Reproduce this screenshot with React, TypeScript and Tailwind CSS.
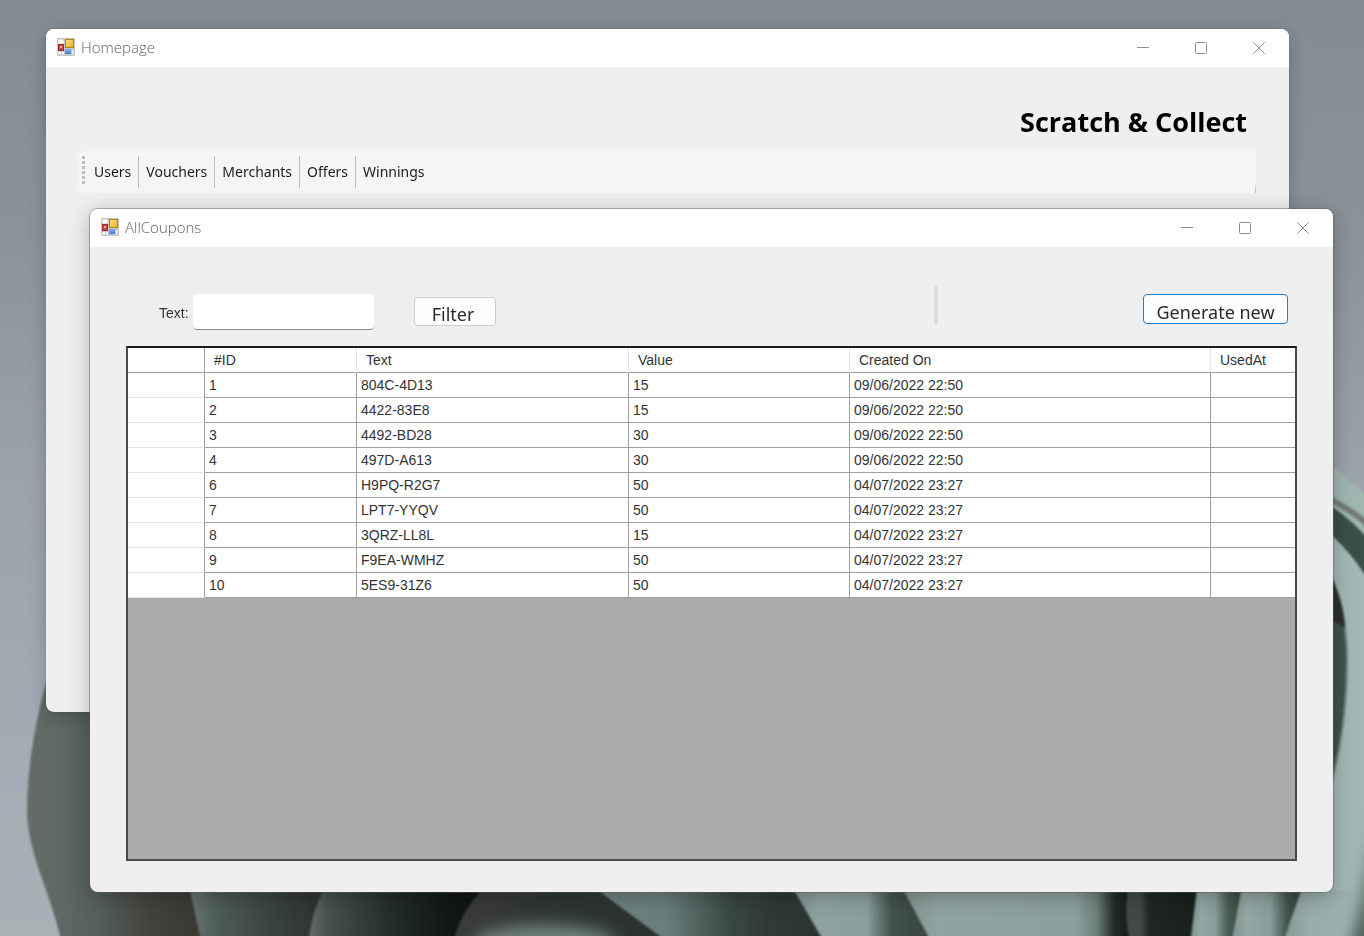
import React, { useState } from "react";

type Coupon = { id: number; text: string; value: number; createdOn: string; usedAt: string };

const COUPONS: Coupon[] = [
  { id: 1, text: "804C-4D13", value: 15, createdOn: "09/06/2022 22:50", usedAt: "" },
  { id: 2, text: "4422-83E8", value: 15, createdOn: "09/06/2022 22:50", usedAt: "" },
  { id: 3, text: "4492-BD28", value: 30, createdOn: "09/06/2022 22:50", usedAt: "" },
  { id: 4, text: "497D-A613", value: 30, createdOn: "09/06/2022 22:50", usedAt: "" },
  { id: 6, text: "H9PQ-R2G7", value: 50, createdOn: "04/07/2022 23:27", usedAt: "" },
  { id: 7, text: "LPT7-YYQV", value: 50, createdOn: "04/07/2022 23:27", usedAt: "" },
  { id: 8, text: "3QRZ-LL8L", value: 15, createdOn: "04/07/2022 23:27", usedAt: "" },
  { id: 9, text: "F9EA-WMHZ", value: 50, createdOn: "04/07/2022 23:27", usedAt: "" },
  { id: 10, text: "5ES9-31Z6", value: 50, createdOn: "04/07/2022 23:27", usedAt: "" },
];

const MENU = ["Users", "Vouchers", "Merchants", "Offers", "Winnings"];

type Stop = [number, string];

function Shade({ id, from, to, stops }: { id: string; from: number; to: number; stops: Stop[] }) {
  return (
    <linearGradient id={id} gradientUnits="userSpaceOnUse" x1={from} x2={to} y1="0" y2="0">
      {stops.map(([offset, color]) => (
        <stop key={offset} offset={offset} stopColor={color} />
      ))}
    </linearGradient>
  );
}

function Wallpaper() {
  return (
    <svg
      aria-hidden="true"
      className="absolute inset-0 h-full w-full"
      viewBox="0 0 1364 936"
      preserveAspectRatio="none"
    >
      <defs>
        <linearGradient id="sky" x1="0" y1="0" x2="0" y2="1">
          <stop offset="0" stopColor="#828c92" />
          <stop offset="0.25" stopColor="#8a939a" />
          <stop offset="0.5" stopColor="#9aa2ab" />
          <stop offset="0.8" stopColor="#a3acb5" />
          <stop offset="1" stopColor="#a8b2b5" />
        </linearGradient>
        <filter id="soft" x="-20%" y="-20%" width="140%" height="140%" colorInterpolationFilters="sRGB">
          <feGaussianBlur stdDeviation="1" />
        </filter>
        <filter id="glow" x="-50%" y="-50%" width="200%" height="200%" colorInterpolationFilters="sRGB">
          <feGaussianBlur stdDeviation="8" />
        </filter>
        <Shade id="p1" from={27} to={200} stops={[[0, "#666b68"], [0.15, "#5e6b66"], [0.4, "#56605b"], [0.7, "#43443f"], [1, "#393832"]]} />
        <Shade id="p2" from={190} to={320} stops={[[0, "#6a7672"], [0.2, "#4f5d58"], [0.6, "#3b4540"], [1, "#2e322e"]]} />
        <Shade id="p3" from={309} to={470} stops={[[0, "#646c68"], [0.12, "#46524d"], [0.5, "#262e2a"], [0.85, "#111815"], [1, "#0f1512"]]} />
        <Shade id="p4" from={460} to={680} stops={[[0, "#3c3c39"], [0.4, "#303733"], [1, "#2b322e"]]} />
        <Shade id="p5" from={600} to={820} stops={[[0, "#6f827e"], [0.3, "#697f7c"], [0.6, "#394742"], [0.8, "#2e3834"], [1, "#2b3632"]]} />
        <Shade id="p6" from={795} to={915} stops={[[0, "#81938f"], [0.2, "#8ea3a0"], [0.6, "#8a9f9c"], [0.8, "#44534e"], [1, "#3b4843"]]} />
        <Shade id="p7" from={905} to={1130} stops={[[0, "#82948f"], [0.15, "#8fa3a0"], [0.75, "#8ca19d"], [0.85, "#6e827d"], [0.93, "#222b27"], [1, "#151c18"]]} />
        <Shade id="p8" from={1127} to={1200} stops={[[0, "#424945"], [0.18, "#434a47"], [0.3, "#202723"], [1, "#182019"]]} />
        <Shade id="p9" from={1191} to={1240} stops={[[0, "#809490"], [0.2, "#93a7a4"], [0.5, "#879d98"], [0.75, "#4b5e57"], [1, "#394941"]]} />
        <Shade id="p10" from={1234} to={1300} stops={[[0, "#83958f"], [0.2, "#93a7a4"], [0.55, "#889e99"], [0.8, "#42554e"], [1, "#33453d"]]} />
        <Shade id="p11" from={1285} to={1364} stops={[[0, "#84988f"], [0.3, "#98acaa"], [0.7, "#9bb1ae"], [1, "#a5bab8"]]} />
      </defs>
      <rect width="1364" height="936" fill="url(#sky)" />
      <g filter="url(#soft)">
        <path d="M50 670C36 715 27 765 27 815C30 860 52 895 62 945H340V670Z" fill="url(#p1)" />
        <path d="M188 880Q194 910 202 945H340V880Z" fill="url(#p2)" />
        <path d="M330 880Q312 905 308 945H500V880Z" fill="url(#p3)" />
        <path d="M495 880Q464 900 452 945H700V880Z" fill="url(#p4)" />
        <ellipse cx="545" cy="942" rx="70" ry="17" fill="#718380" filter="url(#glow)" />
        <path d="M584 880Q630 914 672 945H850V880Z" fill="url(#p5)" />
        <path d="M788 880L826 945H940V880Z" fill="url(#p6)" />
        <path d="M898 880L933 945H1150V880Z" fill="url(#p7)" />
        <path d="M1130 880Q1122 912 1131 945H1210V880Z" fill="url(#p8)" />
        <path d="M1198 880L1190 945H1260V880Z" fill="url(#p9)" />
        <path d="M1243 880L1231 945H1310V880Z" fill="url(#p10)" />
        <path d="M1305 880L1282 945H1374V880Z" fill="url(#p11)" />
        <path d="M1320 457Q1350 478 1374 503V890H1310V457Z" fill="#9fb6b1" />
        <path d="M1320 495Q1348 506 1374 530" fill="none" stroke="#737b78" strokeWidth="6" />
        <path d="M1320 500Q1348 514 1374 546V590Q1350 548 1320 526Z" fill="#3b4f49" />
        <path d="M1320 526Q1350 548 1374 590V890H1320Z" fill="#a3b8b5" />
        <path d="M1328 570Q1347 610 1347 660Q1347 730 1328 795Z" fill="#40534d" stroke="#73817c" strokeWidth="2" />
        <path d="M1328 570Q1344 600 1345 628L1328 618Z" fill="#2d302c" />
      </g>
      <path d="M1374 820Q1368 890 1350 950H1374Z" fill="#405149" filter="url(#glow)" />
    </svg>
  );
}

function FormIcon() {
  return (
    <svg aria-hidden="true" className="h-[18px] w-[18px] shrink-0" viewBox="0 0 18 18">
      <defs>
        <linearGradient id="gold" x1="0" y1="0" x2="1" y2="1">
          <stop offset="0" stopColor="#ffe08a" />
          <stop offset="1" stopColor="#e9b312" />
        </linearGradient>
        <linearGradient id="azure" x1="0" y1="0" x2="0" y2="1">
          <stop offset="0" stopColor="#8ab2f6" />
          <stop offset="1" stopColor="#4478dc" />
        </linearGradient>
      </defs>
      <rect width="18" height="18" rx="1" fill="#c6c6c6" />
      <rect x="1.5" y="1.5" width="5" height="4" fill="#fff" />
      <rect x="1.5" y="14" width="2.5" height="2.5" fill="#fff" />
      <rect x="5" y="14" width="2" height="2.5" fill="#fff" />
      <rect x="15" y="12" width="1.5" height="4.5" fill="#f3f3f7" />
      <rect x="1.5" y="6.5" width="5" height="6" fill="#c8463a" stroke="#9e2d24" />
      <rect x="3" y="8" width="2" height="2" fill="#eda89b" />
      <rect x="8.5" y="1.5" width="8" height="8" fill="url(#gold)" stroke="#b5860c" />
      <rect x="8" y="11" width="6" height="5" fill="url(#azure)" />
    </svg>
  );
}

function TitleBar({ title }: { title: string }) {
  const button = "flex h-[38px] w-[58px] items-center justify-center text-[#8c8c8c]";
  return (
    <header className="flex h-[38px] shrink-0 items-center bg-white pl-[11px] pr-px">
      <div className="flex flex-1 items-center gap-1.5 pb-[2px]">
        <FormIcon />
        <h2 className="font-['Open_Sans','Noto_Sans',sans-serif] text-[15px] font-light leading-5 text-[#5f5f5f]">
          {title}
        </h2>
      </div>
      <button type="button" aria-label="Minimize" className={button}>
        <svg className="h-3 w-3" viewBox="0 0 12 12" fill="none" stroke="currentColor">
          <path d="M0 5.5H12" />
        </svg>
      </button>
      <button type="button" aria-label="Maximize" className={button}>
        <svg className="h-3 w-3" viewBox="0 0 12 12" fill="none" stroke="currentColor">
          <rect x="0.5" y="0.5" width="11" height="11" rx="1" />
        </svg>
      </button>
      <button type="button" aria-label="Close" className={button}>
        <svg className="h-3 w-3" viewBox="0 0 12 12" fill="none" stroke="currentColor">
          <path d="M0.3 0.3L11.7 11.7M11.7 0.3L0.3 11.7" />
        </svg>
      </button>
    </header>
  );
}

function HomeWindow() {
  return (
    <section
      aria-label="Homepage"
      className="absolute bottom-[224px] left-[46px] right-[75px] top-[29px] flex flex-col overflow-hidden rounded-lg bg-[#efefef] shadow-[0_0_1px_rgba(0,0,0,0.5),0_4px_18px_rgba(0,0,0,0.22)]"
    >
      <TitleBar title="Homepage" />
      <div className="flex flex-col px-[33px] pt-9">
        <h1 className="pr-[9px] text-right font-['Open_Sans','Noto_Sans',sans-serif] text-[27px] font-bold leading-[38px] text-black">
          Scratch &amp; Collect
        </h1>
        <nav className="mt-[10px] flex h-[42px] items-center rounded bg-[#f5f5f5] pl-[3px]">
          <span className="mb-1 h-[28px] w-[3px] bg-[repeating-linear-gradient(to_bottom,#bdbdbd_0_3px,transparent_3px_5px)]" />
          <ul className="ml-0.5 flex items-center font-['Noto_Sans','Open_Sans',sans-serif] text-[14px] leading-8 text-[#1c1c1c]">
            {MENU.map((item) => (
              <li key={item} className="border-r border-[#bfbfbf] px-[7px] last:border-r-0">
                <button type="button">{item}</button>
              </li>
            ))}
          </ul>
          <span className="ml-auto h-3 w-px self-end bg-linear-to-b from-transparent to-[#b5b5b5]" />
        </nav>
      </div>
    </section>
  );
}

function CouponsTable() {
  const head = "border-b border-r border-b-[#a0a0a0] border-r-[#e5e5e5] pl-[9px] text-left font-normal";
  const cell = "border-b border-r border-[#a0a0a0] pl-1";
  return (
    <div className="min-h-0 flex-1 overflow-hidden border-2 border-[#4a4a4a] border-t-[#1c1c1c] bg-[#ababab]">
      <table className="w-full table-fixed border-separate border-spacing-0 bg-white font-['Liberation_Sans',sans-serif] text-[14px] leading-6 text-[#333333]">
        <colgroup>
          <col className="w-[77px]" />
          <col className="w-[152px]" />
          <col className="w-[272px]" />
          <col className="w-[221px]" />
          <col />
          <col className="w-[84px]" />
        </colgroup>
        <thead>
          <tr className="h-[25px]">
            <td className="border-b border-r border-[#a0a0a0]" />
            <th scope="col" className={head}>#ID</th>
            <th scope="col" className={head}>Text</th>
            <th scope="col" className={head}>Value</th>
            <th scope="col" className={head}>Created On</th>
            <th scope="col" className="border-b border-[#a0a0a0] pl-[9px] text-left font-normal">UsedAt</th>
          </tr>
        </thead>
        <tbody>
          {COUPONS.map((c) => (
            <tr key={c.id} className="h-[25px]">
              <td className="border-b border-r border-b-[#e5e5e5] border-r-[#a0a0a0]" />
              <td className={cell}>{c.id}</td>
              <td className={cell}>{c.text}</td>
              <td className={cell}>{c.value}</td>
              <td className={cell}>{c.createdOn}</td>
              <td className="border-b border-[#a0a0a0] pl-1">{c.usedAt}</td>
            </tr>
          ))}
        </tbody>
      </table>
    </div>
  );
}

function CouponsWindow() {
  const [text, setText] = useState("");
  return (
    <section
      aria-label="AllCoupons"
      className="absolute bottom-[44px] left-[90px] right-[31px] top-[209px] flex flex-col overflow-hidden rounded-lg bg-[#efefef] shadow-[0_0_0_1px_rgba(90,90,90,0.45),0_4px_22px_rgba(0,0,0,0.28)]"
    >
      <TitleBar title="AllCoupons" />
      <div className="flex min-h-0 flex-1 flex-col px-9 pb-[31px] pt-[38px]">
        <form className="flex h-[61px] shrink-0 items-start pr-[9px]" onSubmit={(e) => e.preventDefault()}>
          <label
            htmlFor="coupon-text"
            className="ml-[33px] mt-4 w-[34px] font-['Liberation_Sans',sans-serif] text-[14px] leading-6 text-[#333333]"
          >
            Text:
          </label>
          <input
            id="coupon-text"
            type="text"
            value={text}
            onChange={(e) => setText(e.target.value)}
            className="mt-[9px] h-9 w-[181px] rounded-sm border-b border-[#8a8a8a] bg-white px-2 text-[14px] outline-none"
          />
          <button
            type="submit"
            className="ml-10 mt-3 flex h-[29px] w-[82px] items-end justify-center overflow-hidden rounded border border-[#cccccc] bg-[#fdfdfd] pr-1 font-['Noto_Sans','Open_Sans',sans-serif] text-[18px] leading-[22px] text-[#2a2a2a]"
          >
            Filter
          </button>
          <span className="flex-1" />
          <span className="h-[39px] w-1 bg-[#dcdcdc]" />
          <span className="w-[205px]" />
          <button
            type="button"
            className="mt-[9px] flex h-[30px] w-[145px] items-end justify-center overflow-hidden whitespace-nowrap rounded border border-[#1b7fd0] bg-[#fdfdfd] font-['Noto_Sans','Open_Sans',sans-serif] text-[18px] leading-[22px] text-[#2a2a2a]"
          >
            Generate new
          </button>
        </form>
        <CouponsTable />
      </div>
    </section>
  );
}

export default function App() {
  return (
    <main className="relative min-h-screen overflow-hidden bg-[#8a939a]">
      <Wallpaper />
      <HomeWindow />
      <CouponsWindow />
    </main>
  );
}
